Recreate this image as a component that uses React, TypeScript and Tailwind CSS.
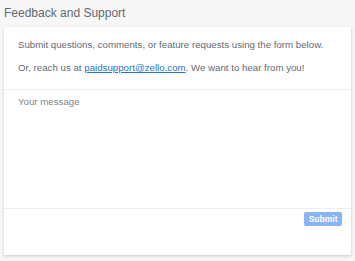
export default function App() {
  return (
    <div className="min-h-[261px] bg-[#f7f7f7] px-1 pt-[3px] font-['Liberation_Sans',Arial,sans-serif]">
      <h1 className="text-[12px] leading-[20px] text-[#5f6b73]">Feedback and Support</h1>
      <div className="mt-[4px] w-[347px] bg-white shadow-[0_1px_3px_rgba(0,0,0,0.2)]">
        <div className="px-[14px] pt-[11px] pb-[14px] text-[9.7px] leading-[14px] text-[#5f6b73]">
          <p>Submit questions, comments, or feature requests using the form below.</p>
          <p className="mt-[9px]">
            Or, reach us at{" "}
            <a href="#" className="text-[#1a73e8] underline">
              paidsupport@zello.com
            </a>
            . We want to hear from you!
          </p>
        </div>
        <div className="border-t border-[#eeeeee]">
          <textarea
            placeholder="Your message"
            className="block h-[118px] w-full resize-none px-[14px] pt-[5px] text-[9.7px] leading-[14px] text-[#5f6b73] outline-none placeholder:text-[#7a868c]"
          />
        </div>
        <div className="flex h-[47px] justify-end border-t border-[#eeeeee] px-[9px] pt-[3px]">
          <button className="h-[14px] rounded-[2px] bg-[#8ab4f8] px-[4.5px] text-[8.5px] font-bold leading-[14px] text-white">
            Submit
          </button>
        </div>
      </div>
    </div>
  );
}
